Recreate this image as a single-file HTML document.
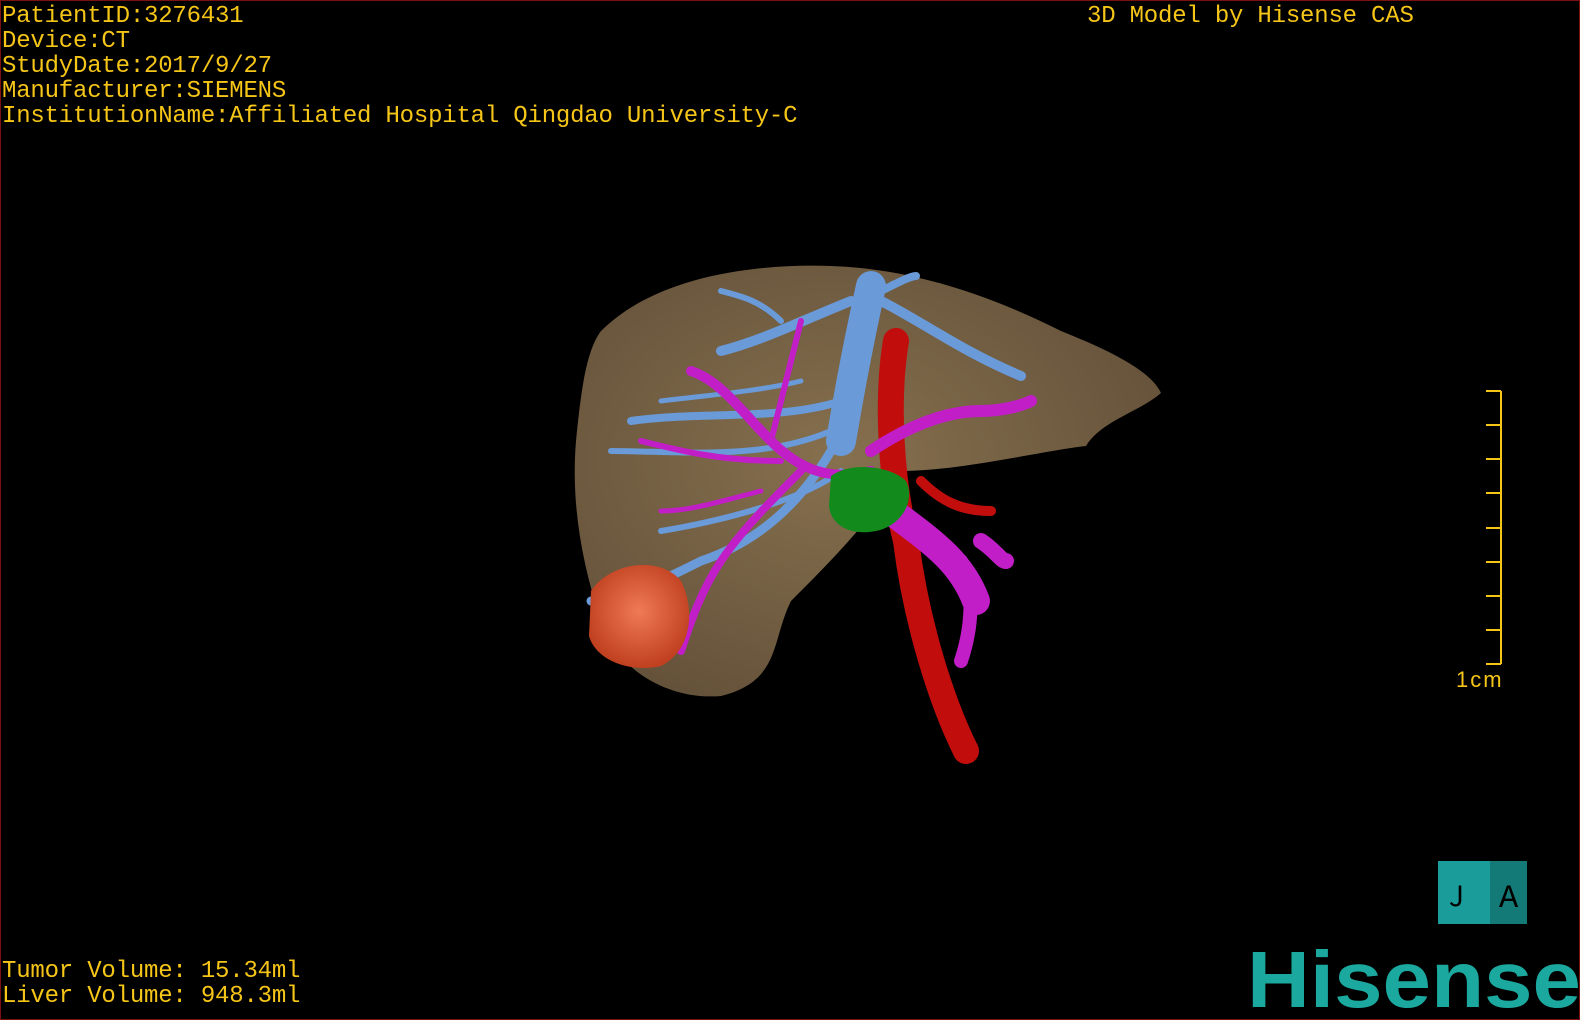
<!DOCTYPE html>
<html><head><meta charset="utf-8"><style>
html,body{margin:0;padding:0;background:#000;}
#c{position:relative;width:1580px;height:1020px;background:#000;overflow:hidden;box-sizing:border-box;border:1px solid #7a1010;}
.t{position:absolute;color:#f5c518;font-family:"Liberation Mono","Noto Sans CJK SC",monospace;font-size:24px;line-height:25px;white-space:pre;letter-spacing:-0.2px;}
</style></head><body><div id="c">
<div class="t" style="left:1px;top:3px">PatientID:3276431
Device:CT
StudyDate:2017/9/27
Manufacturer:SIEMENS
InstitutionName:Affiliated Hospital Qingdao University-C</div>
<div class="t" style="left:1086px;top:3px">3D Model by Hisense CAS</div>
<div class="t" style="left:1px;top:958px">Tumor Volume: 15.34ml
Liver Volume: 948.3ml</div>
<svg width="1580" height="1020" style="position:absolute;left:0;top:0">
<defs>
<radialGradient id="lv" cx="45%" cy="45%" r="60%"><stop offset="0" stop-color="#86704e"/><stop offset="1" stop-color="#65523a"/></radialGradient>
<radialGradient id="tu" cx="50%" cy="45%" r="55%"><stop offset="0" stop-color="#f07a55"/><stop offset="1" stop-color="#c04020"/></radialGradient>
</defs>
<path d="M600 330 C650 280 740 262 830 265 C920 268 1000 300 1060 330 C1110 350 1150 370 1160 392 C1140 410 1100 420 1085 445 C1040 450 960 470 900 470 C870 520 830 560 790 600 C770 640 780 680 720 695 C660 700 610 660 600 620 C580 560 570 500 575 440 C580 390 585 350 600 330Z" fill="url(#lv)"/>
<g stroke="#c20d0d" fill="none" stroke-linecap="round">
<path d="M895 340 C885 400 890 480 905 540 C915 620 940 700 965 750" stroke-width="26"/>
<path d="M920 480 C940 500 960 510 990 510" stroke-width="10"/>
</g>
<g stroke="#6a9ad8" fill="none" stroke-linecap="round">
<path d="M870 285 C860 330 850 380 840 440" stroke-width="30"/>
<path d="M850 300 C800 320 760 340 720 350" stroke-width="10"/>
<path d="M880 300 C920 320 960 350 1020 375" stroke-width="10"/>
<path d="M880 290 C900 280 910 275 915 275" stroke-width="8"/>
<path d="M840 400 C780 420 700 410 630 420" stroke-width="8"/>
<path d="M830 430 C760 460 680 450 610 450" stroke-width="6"/>
<path d="M830 450 C800 500 760 540 700 560 C660 580 640 590 590 600" stroke-width="9"/>
<path d="M780 320 C760 300 740 295 720 290" stroke-width="6"/>
<path d="M840 470 C800 500 720 520 660 530" stroke-width="6"/>
<path d="M800 380 C760 390 700 395 660 400" stroke-width="5"/>
</g>
<g stroke="#c21ec8" fill="none" stroke-linecap="round">
<path d="M870 470 C830 480 800 470 770 440 C740 410 720 380 690 370" stroke-width="10"/>
<path d="M870 450 C900 430 940 410 980 410 C1000 410 1020 405 1030 400" stroke-width="12"/>
<path d="M800 470 C770 500 740 530 720 560 C700 590 690 620 680 650" stroke-width="8"/>
<path d="M780 460 C720 460 680 450 640 440" stroke-width="6"/>
<path d="M760 490 C720 500 690 510 660 510" stroke-width="5"/>
<path d="M770 440 C780 400 790 360 800 320" stroke-width="6"/>
<path d="M890 510 C930 540 960 560 975 600" stroke-width="28"/>
<path d="M960 560 C975 590 970 630 960 660" stroke-width="14"/>
<path d="M980 540 C995 550 1000 560 1005 560" stroke-width="16"/>
</g>
<path d="M830 475 C850 460 890 465 905 480 C915 500 900 525 875 530 C850 535 830 525 828 505Z" fill="#138a1c"/>
<path d="M590 590 C610 560 660 555 680 580 C695 610 690 650 660 665 C630 672 595 660 588 635Z" fill="url(#tu)"/>
<g stroke="#f5c518" stroke-width="2" fill="none">
<path d="M1500 390 V663"/>
<path d="M1485 390H1500M1485 424H1500M1485 458H1500M1485 492H1500M1485 527H1500M1485 561H1500M1485 595H1500M1485 629H1500M1485 663H1500"/>
</g>
<text x="1455" y="686" fill="#f5c518" font-family="Liberation Sans,sans-serif" font-size="22" letter-spacing="2">1cm</text>
<rect x="1437" y="860" width="52" height="63" fill="#1a9c9a"/>
<rect x="1489" y="860" width="37" height="63" fill="#137a78"/>
<text x="1448" y="905" fill="#000" font-family="Noto Sans CJK SC,sans-serif" font-size="28">J</text>
<text x="1498" y="906" fill="#000" font-family="Liberation Mono,monospace" font-size="32">A</text>
<text x="1246" y="1006" fill="#1ba89e" font-family="Liberation Sans,sans-serif" font-weight="bold" font-size="80" letter-spacing="0" textLength="334" lengthAdjust="spacingAndGlyphs">Hisense</text>
</svg>
</div></body></html>
